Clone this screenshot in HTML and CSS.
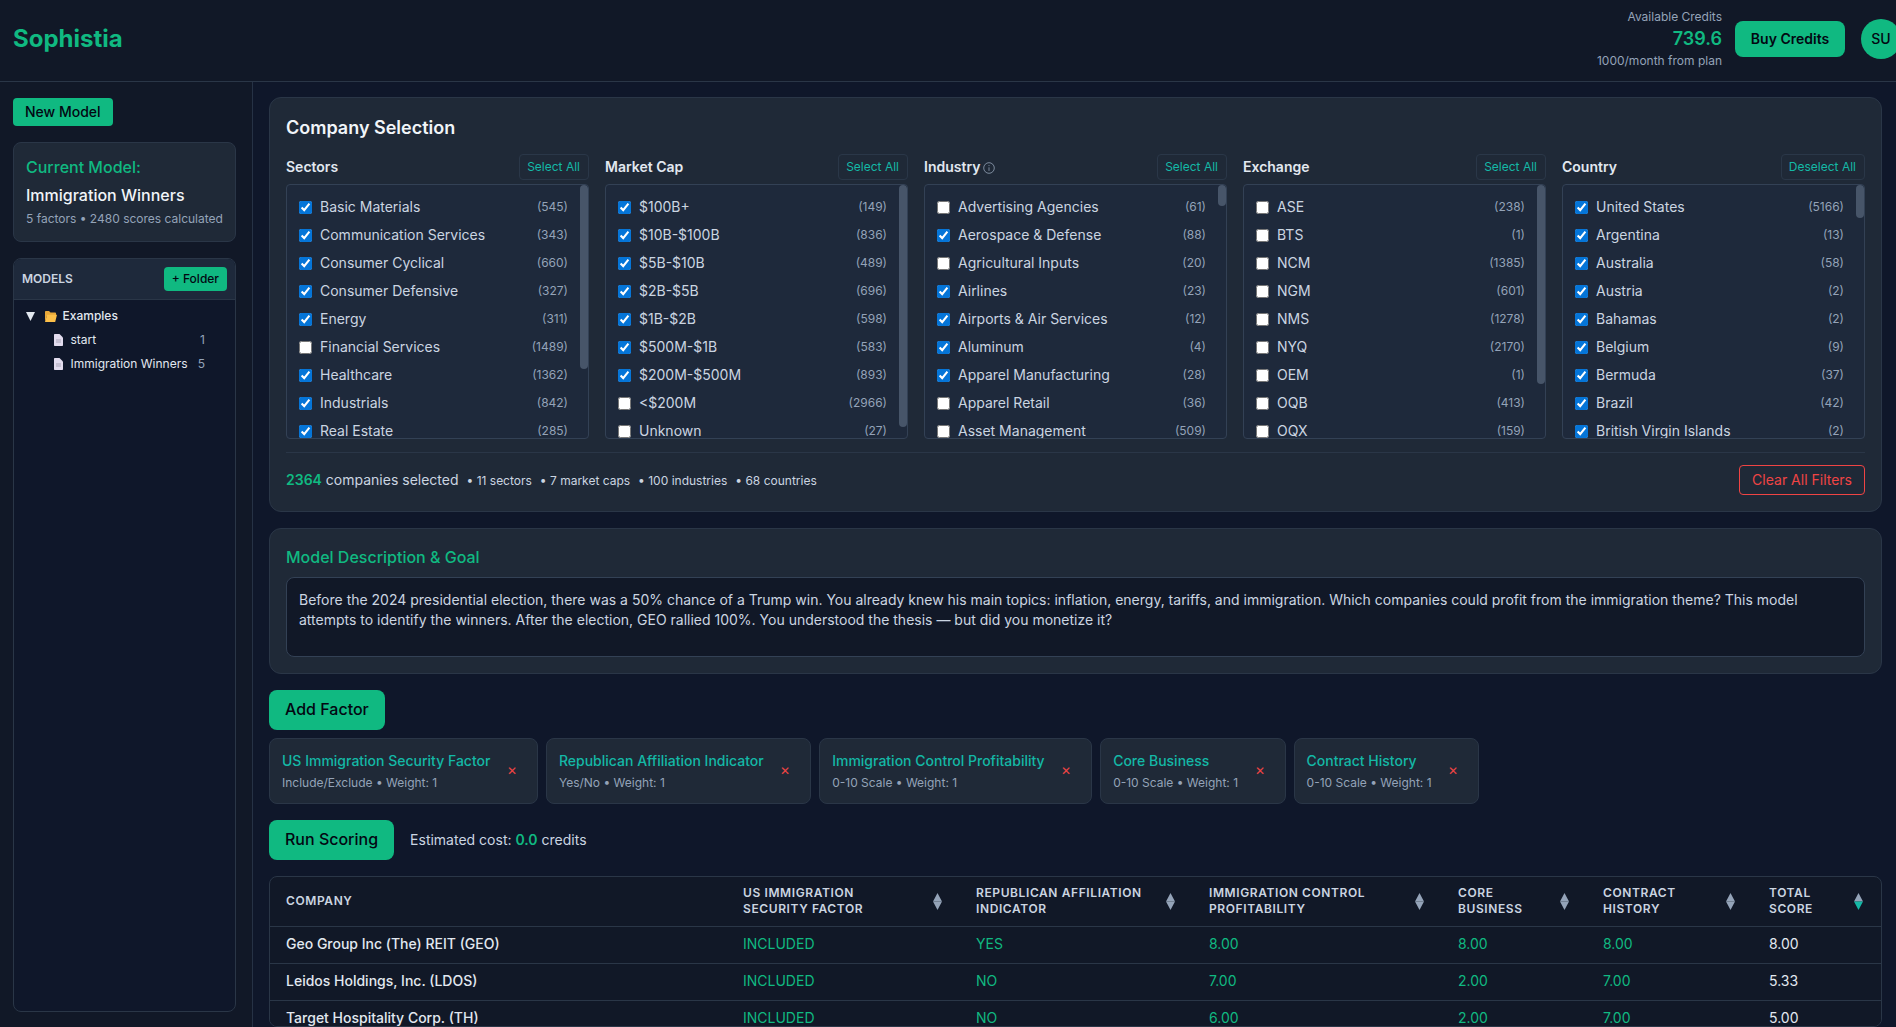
FILE: index.html
```
<!DOCTYPE html>
<html lang="en">
<head>
<meta charset="utf-8">
<title>Sophistia</title>
<link rel="stylesheet" href="styles.css">
</head>
<body>
<header class="topbar">
  <div class="logo">Sophistia</div>
  <div class="account">
    <div class="credits">
      <div class="credits-label">Available Credits</div>
      <div class="credits-value">739.6</div>
      <div class="credits-label">1000/month from plan</div>
    </div>
    <button class="btn btn-buy">Buy Credits</button>
    <div class="avatar">SU</div>
  </div>
</header>
<div class="app">
  <aside class="sidebar">
    <div class="new-row"><button class="btn btn-new">New Model</button></div>
    <section class="current">
      <div class="current-label">Current Model:</div>
      <div class="current-name">Immigration Winners</div>
      <div class="current-meta">5 factors • 2480 scores calculated</div>
    </section>
    <section class="models">
      <div class="models-head">
        <span class="models-title">MODELS</span>
        <button class="btn btn-folder">+ Folder</button>
      </div>
      <div class="tree">
        <div class="tree-folder">
          <svg class="ico-caret" viewBox="0 0 9 9"><polygon points="0,0 9,0 4.500,9"/></svg>
          <svg class="ico-folder" viewBox="0 0 12 11"><path class="folder-back" d="M0 1c0-.5.4-1 1-1h3l1.500 1.500H10c.5 0 1 .4 1 1V5H2L0 11z"/><path class="folder-front" d="M2.200 3.800H12l-1.800 7.200H0z"/></svg>
          <span class="tree-label">Examples</span>
        </div>
        <div class="tree-file">
          <svg class="ico-file" viewBox="0 0 9 12"><path class="file-page" d="M0 1c0-.6.4-1 1-1h4.500L9 3.500V11c0 .6-.4 1-1 1H1c-.6 0-1-.4-1-1z"/><path class="file-line" d="M2 5.500h5v1H2zM2 7.500h5v1H2z"/></svg>
          <span class="tree-label file-name">start</span><span class="tree-label file-count">1</span>
        </div>
        <div class="tree-file">
          <svg class="ico-file" viewBox="0 0 9 12"><path class="file-page" d="M0 1c0-.6.4-1 1-1h4.500L9 3.500V11c0 .6-.4 1-1 1H1c-.6 0-1-.4-1-1z"/><path class="file-line" d="M2 5.500h5v1H2zM2 7.500h5v1H2z"/></svg>
          <span class="tree-label file-name">Immigration Winners</span><span class="tree-label file-count">5</span>
        </div>
      </div>
    </section>
  </aside>
  <main class="content">
    <section class="card selection">
      <h2 class="card-title">Company Selection</h2>
      <div class="filters">
        <div class="filter">
          <div class="filter-head"><span class="filter-name">Sectors</span><button class="btn-select">Select All</button></div>
          <div class="filter-box">
            <ul class="filter-list">
              <li class="opt"><input type="checkbox" checked><span>Basic Materials</span><em>(545)</em></li>
              <li class="opt"><input type="checkbox" checked><span>Communication Services</span><em>(343)</em></li>
              <li class="opt"><input type="checkbox" checked><span>Consumer Cyclical</span><em>(660)</em></li>
              <li class="opt"><input type="checkbox" checked><span>Consumer Defensive</span><em>(327)</em></li>
              <li class="opt"><input type="checkbox" checked><span>Energy</span><em>(311)</em></li>
              <li class="opt"><input type="checkbox"><span>Financial Services</span><em>(1489)</em></li>
              <li class="opt"><input type="checkbox" checked><span>Healthcare</span><em>(1362)</em></li>
              <li class="opt"><input type="checkbox" checked><span>Industrials</span><em>(842)</em></li>
              <li class="opt"><input type="checkbox" checked><span>Real Estate</span><em>(285)</em></li>
            </ul>
            <div class="thumb" style="height:184px"></div>
          </div>
        </div>
        <div class="filter">
          <div class="filter-head"><span class="filter-name">Market Cap</span><button class="btn-select">Select All</button></div>
          <div class="filter-box">
            <ul class="filter-list">
              <li class="opt"><input type="checkbox" checked><span>$100B+</span><em>(149)</em></li>
              <li class="opt"><input type="checkbox" checked><span>$10B-$100B</span><em>(836)</em></li>
              <li class="opt"><input type="checkbox" checked><span>$5B-$10B</span><em>(489)</em></li>
              <li class="opt"><input type="checkbox" checked><span>$2B-$5B</span><em>(696)</em></li>
              <li class="opt"><input type="checkbox" checked><span>$1B-$2B</span><em>(598)</em></li>
              <li class="opt"><input type="checkbox" checked><span>$500M-$1B</span><em>(583)</em></li>
              <li class="opt"><input type="checkbox" checked><span>$200M-$500M</span><em>(893)</em></li>
              <li class="opt"><input type="checkbox"><span>&lt;$200M</span><em>(2966)</em></li>
              <li class="opt"><input type="checkbox"><span>Unknown</span><em>(27)</em></li>
            </ul>
            <div class="thumb" style="height:242px"></div>
          </div>
        </div>
        <div class="filter">
          <div class="filter-head"><span class="filter-name">Industry <svg class="ico-info" viewBox="0 0 12 12"><circle cx="6" cy="6" r="5.300"/><path d="M6 5.300v3.600M6 3.100v1"/></svg></span><button class="btn-select">Select All</button></div>
          <div class="filter-box">
            <ul class="filter-list">
              <li class="opt"><input type="checkbox"><span>Advertising Agencies</span><em>(61)</em></li>
              <li class="opt"><input type="checkbox" checked><span>Aerospace &amp; Defense</span><em>(88)</em></li>
              <li class="opt"><input type="checkbox"><span>Agricultural Inputs</span><em>(20)</em></li>
              <li class="opt"><input type="checkbox" checked><span>Airlines</span><em>(23)</em></li>
              <li class="opt"><input type="checkbox" checked><span>Airports &amp; Air Services</span><em>(12)</em></li>
              <li class="opt"><input type="checkbox" checked><span>Aluminum</span><em>(4)</em></li>
              <li class="opt"><input type="checkbox" checked><span>Apparel Manufacturing</span><em>(28)</em></li>
              <li class="opt"><input type="checkbox"><span>Apparel Retail</span><em>(36)</em></li>
              <li class="opt"><input type="checkbox"><span>Asset Management</span><em>(509)</em></li>
            </ul>
            <div class="thumb" style="height:21px"></div>
          </div>
        </div>
        <div class="filter">
          <div class="filter-head"><span class="filter-name">Exchange</span><button class="btn-select">Select All</button></div>
          <div class="filter-box">
            <ul class="filter-list">
              <li class="opt"><input type="checkbox"><span>ASE</span><em>(238)</em></li>
              <li class="opt"><input type="checkbox"><span>BTS</span><em>(1)</em></li>
              <li class="opt"><input type="checkbox"><span>NCM</span><em>(1385)</em></li>
              <li class="opt"><input type="checkbox"><span>NGM</span><em>(601)</em></li>
              <li class="opt"><input type="checkbox"><span>NMS</span><em>(1278)</em></li>
              <li class="opt"><input type="checkbox"><span>NYQ</span><em>(2170)</em></li>
              <li class="opt"><input type="checkbox"><span>OEM</span><em>(1)</em></li>
              <li class="opt"><input type="checkbox"><span>OQB</span><em>(413)</em></li>
              <li class="opt"><input type="checkbox"><span>OQX</span><em>(159)</em></li>
            </ul>
            <div class="thumb" style="height:199px"></div>
          </div>
        </div>
        <div class="filter">
          <div class="filter-head"><span class="filter-name">Country</span><button class="btn-select">Deselect All</button></div>
          <div class="filter-box">
            <ul class="filter-list">
              <li class="opt"><input type="checkbox" checked><span>United States</span><em>(5166)</em></li>
              <li class="opt"><input type="checkbox" checked><span>Argentina</span><em>(13)</em></li>
              <li class="opt"><input type="checkbox" checked><span>Australia</span><em>(58)</em></li>
              <li class="opt"><input type="checkbox" checked><span>Austria</span><em>(2)</em></li>
              <li class="opt"><input type="checkbox" checked><span>Bahamas</span><em>(2)</em></li>
              <li class="opt"><input type="checkbox" checked><span>Belgium</span><em>(9)</em></li>
              <li class="opt"><input type="checkbox" checked><span>Bermuda</span><em>(37)</em></li>
              <li class="opt"><input type="checkbox" checked><span>Brazil</span><em>(42)</em></li>
              <li class="opt"><input type="checkbox" checked><span>British Virgin Islands</span><em>(2)</em></li>
            </ul>
            <div class="thumb" style="height:33px"></div>
          </div>
        </div>
      </div>
      <div class="summary">
        <div class="summary-text">
          <span class="summary-main"><b>2364</b> companies selected</span>
          <span class="summary-part">• 11 sectors</span>
          <span class="summary-part">• 7 market caps</span>
          <span class="summary-part">• 100 industries</span>
          <span class="summary-part">• 68 countries</span>
        </div>
        <button class="btn-clear">Clear All Filters</button>
      </div>
    </section>
    <section class="card description">
      <h3 class="desc-title">Model Description &amp; Goal</h3>
      <div class="desc-box">Before the 2024 presidential election, there was a 50% chance of a Trump win. You already knew his main topics: inflation, energy, tariffs, and immigration. Which companies could profit from the immigration theme? This model attempts to identify the winners. After the election, GEO rallied 100%. You understood the thesis — but did you monetize it?</div>
    </section>
    <div class="action-row"><button class="btn btn-large">Add Factor</button></div>
    <div class="factors">
      <div class="factor"><div><div class="factor-name">US Immigration Security Factor</div><div class="factor-meta">Include/Exclude • Weight: 1</div></div><button class="factor-x">✕</button></div>
      <div class="factor"><div><div class="factor-name">Republican Affiliation Indicator</div><div class="factor-meta">Yes/No • Weight: 1</div></div><button class="factor-x">✕</button></div>
      <div class="factor"><div><div class="factor-name">Immigration Control Profitability</div><div class="factor-meta">0-10 Scale • Weight: 1</div></div><button class="factor-x">✕</button></div>
      <div class="factor"><div><div class="factor-name">Core Business</div><div class="factor-meta">0-10 Scale • Weight: 1</div></div><button class="factor-x">✕</button></div>
      <div class="factor"><div><div class="factor-name">Contract History</div><div class="factor-meta">0-10 Scale • Weight: 1</div></div><button class="factor-x">✕</button></div>
    </div>
    <div class="run-row">
      <button class="btn btn-large">Run Scoring</button>
      <span class="estimate">Estimated cost: <b>0.0</b> credits</span>
    </div>
    <div class="table-wrap">
      <table class="scores">
        <colgroup><col class="c-company"><col class="c-a"><col class="c-b"><col class="c-c"><col class="c-d"><col class="c-e"><col class="c-f"></colgroup>
        <thead>
          <tr>
            <th>Company</th>
            <th><div class="th-in"><span>US Immigration<br>Security Factor</span><svg class="sort" viewBox="0 0 10 18" preserveAspectRatio="none"><polygon points="5,0 10,9 0,9"/><polygon points="0,9 10,9 5,18"/></svg></div></th>
            <th><div class="th-in"><span>Republican Affiliation<br>Indicator</span><svg class="sort" viewBox="0 0 10 18" preserveAspectRatio="none"><polygon points="5,0 10,9 0,9"/><polygon points="0,9 10,9 5,18"/></svg></div></th>
            <th><div class="th-in"><span>Immigration Control<br>Profitability</span><svg class="sort" viewBox="0 0 10 18" preserveAspectRatio="none"><polygon points="5,0 10,9 0,9"/><polygon points="0,9 10,9 5,18"/></svg></div></th>
            <th><div class="th-in"><span>Core<br>Business</span><svg class="sort" viewBox="0 0 10 18" preserveAspectRatio="none"><polygon points="5,0 10,9 0,9"/><polygon points="0,9 10,9 5,18"/></svg></div></th>
            <th><div class="th-in"><span>Contract<br>History</span><svg class="sort" viewBox="0 0 10 18" preserveAspectRatio="none"><polygon points="5,0 10,9 0,9"/><polygon points="0,9 10,9 5,18"/></svg></div></th>
            <th><div class="th-in"><span>Total<br>Score</span><svg class="sort" viewBox="0 0 10 18" preserveAspectRatio="none"><polygon points="5,0 10,9 0,9"/><polygon class="sort-on" points="0,9 10,9 5,18"/></svg></div></th>
          </tr>
        </thead>
        <tbody>
          <tr><td class="co">Geo Group Inc (The) REIT (GEO)</td><td class="v">INCLUDED</td><td class="v">YES</td><td class="v">8.00</td><td class="v">8.00</td><td class="v">8.00</td><td>8.00</td></tr>
          <tr><td class="co">Leidos Holdings, Inc. (LDOS)</td><td class="v">INCLUDED</td><td class="v">NO</td><td class="v">7.00</td><td class="v">2.00</td><td class="v">7.00</td><td>5.33</td></tr>
          <tr><td class="co">Target Hospitality Corp. (TH)</td><td class="v">INCLUDED</td><td class="v">NO</td><td class="v">6.00</td><td class="v">2.00</td><td class="v">7.00</td><td>5.00</td></tr>
        </tbody>
      </table>
    </div>
  </main>
</div>
</body>
</html>
```
FILE: styles.css
```
* { box-sizing: border-box; }
html, body { margin: 0; height: 100%; overflow: hidden; }
body {
  background: #0f172a;
  color: #e2e8f0;
  font-family: Inter, "Noto Sans", sans-serif;
  font-size: 14px;
}
button { font-family: inherit; cursor: pointer; }
h2, h3 { margin: 0; }
ul { margin: 0; list-style: none; }

/* top bar */
.topbar {
  width: 1914px;
  height: 82px;
  display: flex;
  align-items: center;
  justify-content: space-between;
  padding: 0 13px 3px;
  background: #111827;
  border-bottom: 1px solid #2a3647;
}
.logo { font-size: 24px; line-height: 32px; font-weight: 700; color: #10b981; }
.account { display: flex; align-items: center; gap: 16px; }
.credits { text-align: right; margin-right: -3px; }
.credits-label { font-size: 12px; line-height: 16px; color: #94a3b8; }
.credits-value { font-size: 18px; line-height: 28px; font-weight: 600; color: #10b981; }
.avatar {
  width: 40px; height: 40px;
  padding-bottom: 2px;
  border-radius: 50%;
  background: #10b981;
  color: #030712;
  font-weight: 500;
  display: flex; align-items: center; justify-content: center;
}

/* buttons */
.btn { border: 0; background: #10b981; color: #030712; font-weight: 500; }
.btn-buy { width: 110px; height: 36px; padding: 0 0 2px; border-radius: 8px; font-size: 14px; font-weight: 600; white-space: nowrap; }
.btn-new { height: 28px; padding: 0 12px 2px; border-radius: 4px; font-size: 14px; }
.btn-folder { height: 24px; padding: 0 8px 2px; border-radius: 4px; font-size: 12px; }
.btn-large { height: 40px; padding: 0 16px 2px; border-radius: 8px; font-size: 16px; }

/* layout */
.app { display: flex; height: 945px; width: 1898px; }
.sidebar {
  flex: none;
  width: 253px;
  height: 100%;
  display: flex;
  flex-direction: column;
  gap: 16px;
  padding: 16px 16px 15px 13px;
  border-right: 1px solid #263245;
  background: #111827;
}
.content {
  flex: none;
  width: 1645px;
  padding: 15px 16px 0;
  display: flex;
  flex-direction: column;
  gap: 16px;
}

/* sidebar */
.current {
  height: 100px;
  padding: 12px;
  background: #1f2937;
  border: 1px solid #2a3647;
  border-radius: 8px;
}
.current-label { font-size: 16px; line-height: 24px; font-weight: 500; color: #10b981; }
.current-name { margin-top: 4px; font-size: 16px; line-height: 24px; font-weight: 500; color: #f1f5f9; }
.current-meta { margin-top: 4px; font-size: 12px; line-height: 16px; color: #94a3b8; white-space: nowrap; }
.models {
  flex: 1;
  border: 1px solid #2a3647;
  border-radius: 8px;
  overflow: hidden;
  background: #0f172a;
}
.models-head {
  height: 41px;
  display: flex;
  align-items: center;
  justify-content: space-between;
  padding: 0 8px;
  background: #1e293b;
  border-bottom: 1px solid #2a3647;
}
.models-title { padding-bottom: 2px; font-size: 12px; font-weight: 600; color: #cbd5e1; }
.tree { padding: 4px 8px 8px 12px; font-size: 12px; font-weight: 500; }
.tree-folder { height: 24px; display: flex; align-items: center; }
.tree-label { padding-bottom: 2px; }
.ico-caret { width: 9px; height: 9px; fill: #e2e8f0; margin-right: 10px; }
.ico-folder { width: 12px; height: 11px; margin-right: 5.500px; }
.folder-back { fill: #e9a93a; }
.folder-front { fill: #fcbf49; }
.tree-file { height: 24px; display: flex; align-items: center; padding-left: 28px; padding-right: 22px; }
.ico-file { width: 9px; height: 12px; margin-right: 7.500px; }
.file-page { fill: #e2dcee; }
.file-line { fill: #a9a6b8; }
.file-name { font-weight: 400; }
.file-count { margin-left: auto; font-weight: 400; color: #94a3b8; }

/* cards */
.card {
  background: #1f2937;
  border: 1px solid #2a3647;
  border-radius: 12px;
  padding: 16px;
}
.card-title { font-size: 18px; line-height: 28px; font-weight: 600; color: #f1f5f9; }
.filters { display: grid; grid-template-columns: repeat(5, 1fr); gap: 16px; margin-top: 12px; }
.filter { min-width: 0; }
.filter-head { display: flex; align-items: center; justify-content: space-between; margin-bottom: 4px; }
.filter-name { padding-bottom: 2px; font-size: 14px; font-weight: 600; color: #e2e8f0; }
.ico-info { width: 12px; height: 12px; margin-left: -1px; fill: none; stroke: #94a3b8; stroke-width: .8; vertical-align: -2px; }
.btn-select {
  height: 26px;
  padding: 0 8px 2px 7px;
  background: transparent;
  border: 1px solid #2a3748;
  border-radius: 4px;
  font-size: 12px;
  color: #14b8a6;
}
.filter-box {
  position: relative;
  height: 255px;
  overflow: hidden;
  background: #1e293b;
  border: 1px solid #334155;
  border-radius: 4px;
}
.filter-list { padding: 8px; }
.thumb { position: absolute; top: 0; right: 0; width: 8px; background: #475569; border-radius: 4px; }
.opt { height: 28px; padding: 0 12px 0 4px; display: flex; align-items: center; color: #cbd5e1; }
.opt input { width: 13px; height: 13px; margin: 0 8px 0 0; flex: none; accent-color: #0575d8; }
.opt span { padding-bottom: 2px; }
.opt em { margin-left: auto; padding-bottom: 2px; font-style: normal; font-size: 12px; color: #94a3b8; }
.summary {
  display: flex;
  align-items: center;
  justify-content: space-between;
  margin-top: 13px;
  padding-top: 12px;
  border-top: 1px solid #2a3647;
}
.summary-text { display: flex; align-items: baseline; gap: 8px; padding-bottom: 2px; }
.summary-main { font-size: 14px; color: #cbd5e1; }
.summary-main b { font-weight: 600; color: #10b981; }
.summary-part { font-size: 12px; color: #cbd5e1; }
.btn-clear {
  height: 30px;
  padding: 0 12px 2px;
  background: transparent;
  border: 1px solid #ef4444;
  border-radius: 4px;
  font-size: 14px;
  color: #ef4444;
}

/* description */
.desc-title { font-size: 16px; line-height: 24px; font-weight: 500; color: #10b981; }
.desc-box {
  height: 80px;
  margin-top: 8px;
  padding: 12px;
  background: #111827;
  border: 1px solid #334155;
  border-radius: 8px;
  font-size: 14px;
  line-height: 20px;
  color: #cbd5e1;
}

/* factors */
.action-row { margin-bottom: -8px; }
.factors { display: flex; gap: 8px; }
.factor {
  height: 66px;
  display: flex;
  align-items: center;
  gap: 8.500px;
  padding: 0 12px;
  background: #1f2937;
  border: 1px solid #2a3647;
  border-radius: 8px;
}
.factor-name { font-size: 14px; line-height: 20px; font-weight: 500; color: #14b8a6; }
.factor-meta { margin-top: 4px; font-size: 12px; line-height: 16px; color: #94a3b8; }
.factor-x { padding: 0 8px; background: none; border: 0; color: #ef4444; font-size: 12px; line-height: 16px; }
.run-row { display: flex; align-items: center; gap: 16px; }
.estimate { padding-bottom: 2px; color: #cbd5e1; }
.estimate b { font-weight: 600; color: #10b981; }

/* table */
.table-wrap {
  border: 1px solid #2a3647;
  border-radius: 8px;
  overflow: hidden;
  background: #111827;
}
.scores { width: 1611px; table-layout: fixed; border-collapse: collapse; }
.c-company { width: 457px; }
.c-a, .c-b { width: 233px; }
.c-c { width: 249px; }
.c-d { width: 145px; }
.c-e { width: 166px; }
.c-f { width: 128px; }
.scores th {
  height: 49px;
  padding: 0 16px;
  text-align: left;
  font-size: 12px;
  line-height: 16px;
  font-weight: 600;
  letter-spacing: .6px;
  text-transform: uppercase;
  color: #cbd5e1;
  border-bottom: 1px solid #2a3647;
}
.th-in { display: flex; align-items: center; justify-content: space-between; }
.sort { width: 9px; height: 17px; flex: none; fill: #94a3b8; margin-right: 2px; }
.sort-on { fill: #14b8a6; }
.scores td {
  height: 37px;
  padding: 0 16px 2px;
  font-size: 14px;
  color: #e2e8f0;
  background: #111827;
  border-bottom: 1px solid #2a3647;
}
.scores td.co { font-weight: 500; }
.scores td.v { color: #10b981; }
```
